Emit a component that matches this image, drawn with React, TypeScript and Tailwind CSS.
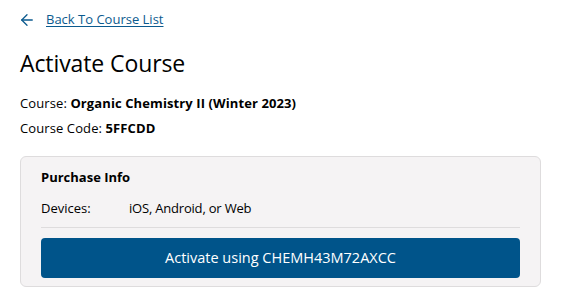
import { ArrowLeft } from "lucide-react";

export default function App() {
  return (
    <div className="min-h-screen bg-white px-5 pt-[10px] text-black font-['Open_Sans',sans-serif]">
      <a href="#" className="flex items-center gap-[10px] h-5 text-[13px] text-[#0b5a8e]">
        <ArrowLeft className="-ml-[2px] w-[18px] h-[18px] stroke-[1.75]" />
        <span className="underline underline-offset-2">Back To Course List</span>
      </a>

      <h1 className="mt-[17px] text-[23px] leading-8 tracking-[-0.1px]">Activate Course</h1>

      <div className="mt-[12px] text-[13px] leading-[25px] tracking-[0.1px]">
        <p>
          Course: <span className="font-bold">Organic Chemistry II (Winter 2023)</span>
        </p>
        <p>
          Course Code: <span className="font-bold">5FFCDD</span>
        </p>
      </div>

      <div className="mt-[15px] rounded-md border border-[#dedcdd] bg-[#f5f3f4] px-5 pt-[10px] pb-2">
        <h2 className="text-[13px] font-bold leading-5">Purchase Info</h2>
        <div className="mt-[11px] flex text-[13px] leading-5">
          <span className="w-[88px]">Devices:</span>
          <span className="tracking-[-0.2px]">iOS, Android, or Web</span>
        </div>
        <div className="mt-[9px] border-t border-[#dedcdd]" />
        <button className="mt-[10px] h-10 w-full rounded-[4px] bg-[#00548a] text-[14.5px] text-white">
          Activate using CHEMH43M72AXCC
        </button>
      </div>
    </div>
  );
}
